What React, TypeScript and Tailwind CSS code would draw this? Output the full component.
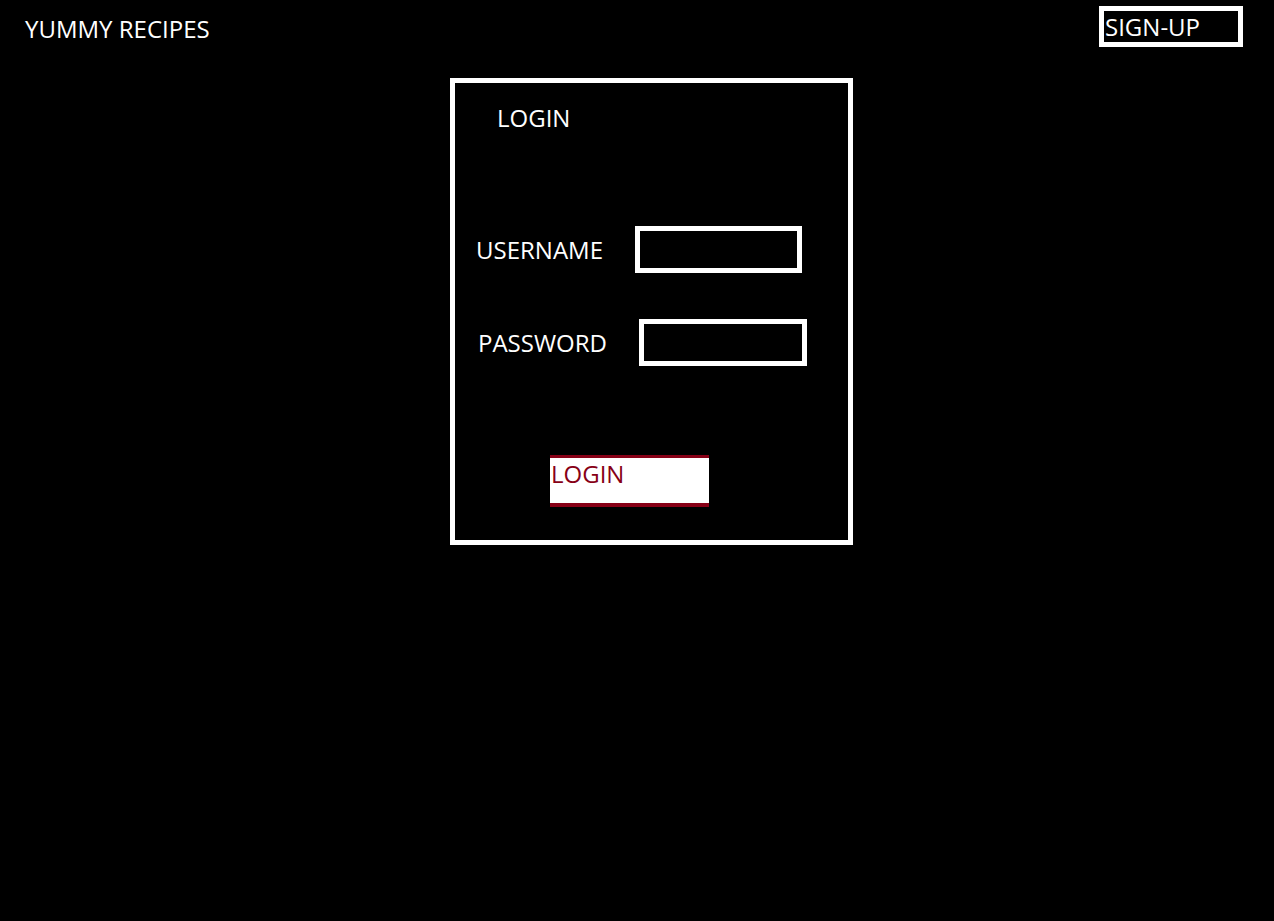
export default function App() {
  return (
    <div
      className="min-h-[921px] w-full bg-black text-white"
      style={{ fontFamily: '"Open Sans", "Liberation Sans", sans-serif' }}
    >
      {/* header */}
      <header className="flex items-start justify-between pl-[25px] pr-[31px] pt-[6px]">
        <div className="mt-[10px] text-[24px] leading-[26px]">YUMMY RECIPES</div>
        <button className="flex h-[41px] w-[144px] items-center border-[5px] border-white pl-[1px] text-[24px] leading-[26px]">
          SIGN-UP
        </button>
      </header>

      {/* login card */}
      <div className="ml-[450px] mt-[31px] flex h-[467px] w-[403px] flex-col border-[5px] border-white">
        <div className="ml-[42px] mt-[22px] text-[24px] leading-[26px]">LOGIN</div>

        <div className="mt-[95px] flex items-center">
          <label className="ml-[21px] w-[159px] text-[24px] leading-[26px]">USERNAME</label>
          <input className="h-[47px] w-[167px] border-[5px] border-white bg-black outline-none" />
        </div>

        <div className="mt-[46px] flex items-center">
          <label className="ml-[23px] w-[161px] text-[24px] leading-[26px]">PASSWORD</label>
          <input
            type="password"
            className="h-[47px] w-[168px] border-[5px] border-white bg-black outline-none"
          />
        </div>

        <button className="ml-[95px] mt-[89px] h-[52px] w-[159px] border-t-[3px] border-b-[4px] border-[#870016] bg-white text-left text-[24px] leading-[26px] text-[#870016]">
          <span className="-mt-[14px] block pl-[1px]">LOGIN</span>
        </button>
      </div>
    </div>
  );
}
